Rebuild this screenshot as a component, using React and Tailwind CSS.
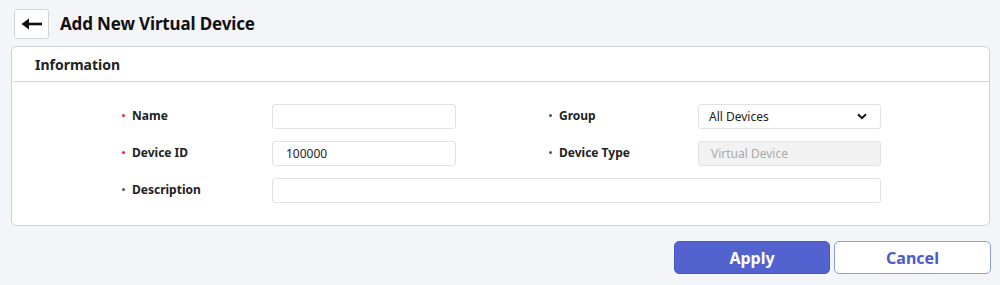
export default function App() {
  const font = { fontFamily: '"Noto Sans", "Open Sans", sans-serif' };
  const Label = ({ text, required }) => (
    <div className="flex items-center h-[25px] text-[12px] font-bold text-[#222] -mt-[1px]">
      <span className={`w-[10px] flex items-center`}>
        <span className={`block w-[3px] h-[3px] rounded-full ${required ? "bg-[#e5302e]" : "bg-[#555]"}`} />
      </span>
      <span>{text}</span>
    </div>
  );
  return (
    <div style={font} className="w-[1000px] h-[285px] bg-[#f4f5f9] overflow-hidden">
      <div className="flex items-center pt-[9px] pl-[14px] h-[38px]">
        <button className="w-[35px] h-[30px] bg-white border border-[#d4d4d8] rounded-[3px] flex items-center justify-center">
          <svg width="22" height="12" viewBox="0 0 22 12">
            <path d="M21 6H7" stroke="#111" strokeWidth="2.6" />
            <path d="M0.5 6L8 0.5V11.5Z" fill="#111" />
          </svg>
        </button>
        <div className="ml-[11px] text-[17px] font-bold text-[#111] leading-none tracking-[-0.15px]">Add New Virtual Device</div>
      </div>
      <div className="ml-[11px] mt-[8px] w-[979px] h-[180px] bg-white border border-[#cfcfd4] rounded-[6px]">
        <div className="h-[35px] border-b border-[#d4d4d8] pl-[23px] flex items-center text-[14px] font-bold text-[#222]">
          Information
        </div>
        <div className="pt-[22px] pl-[110px] grid grid-cols-[150px_184px_93px_149px_183px] gap-y-[12px] items-start">
          <Label text="Name" required />
          <div className="h-[25px] border border-[#e2e2e6] rounded-[3px] bg-white" />
          <div />
          <Label text="Group" />
          <div className="h-[25px] border border-[#e2e2e6] rounded-[3px] bg-white flex items-center justify-between pl-[10px] pr-[13px] text-[12px] text-[#222]">
            <span>All Devices</span>
            <svg width="10" height="7" viewBox="0 0 10 7">
              <path d="M1 1.2l4 4 4-4" stroke="#111" strokeWidth="2" fill="none" />
            </svg>
          </div>

          <Label text="Device ID" required />
          <div className="h-[25px] border border-[#e2e2e6] rounded-[3px] bg-white flex items-center pl-[13px] text-[12px] text-[#222]">
            100000
          </div>
          <div />
          <Label text="Device Type" />
          <div className="h-[25px] border border-[#e2e2e6] rounded-[3px] bg-[#f2f2f2] flex items-center pl-[12px] text-[12px] text-[#aaa]">
            Virtual Device
          </div>

          <Label text="Description" />
          <div className="col-span-4 h-[25px] border border-[#e2e2e6] rounded-[3px] bg-white" />
        </div>
      </div>
      <div className="flex justify-end gap-[4px] pr-[9px] mt-[15px]">
        <button className="w-[156px] h-[33px] rounded-[5px] bg-[#5263d0] border border-[#4a5ac4] text-white text-[16px] font-bold">
          Apply
        </button>
        <button className="w-[157px] h-[33px] rounded-[5px] bg-white border border-[#8e9ae6] text-[#4a5bc9] text-[16px] font-bold">
          Cancel
        </button>
      </div>
    </div>
  );
}
